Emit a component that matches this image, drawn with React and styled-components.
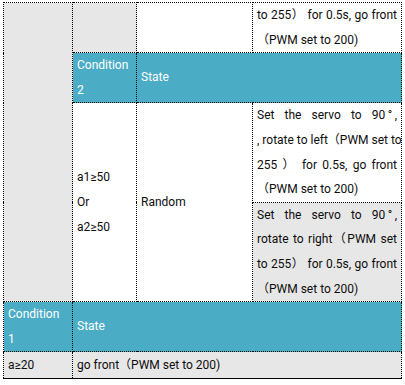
import React from "react";
import styled, { createGlobalStyle } from "styled-components";

const GlobalStyle = createGlobalStyle`
  html, body {
    margin: 0;
    padding: 0;
    background: #ffffff;
  }
  body {
    font-family: Roboto, "DejaVu Sans", "Noto Sans CJK SC", sans-serif;
    font-size: 12px;
    color: #0d0d0d;
  }
`;

const Page = styled.div`
  padding: 2px 0 0 3px;
  width: 405px;
  box-sizing: border-box;
`;

const Table = styled.table`
  border-collapse: collapse;
  table-layout: fixed;
  width: 398px;
  border-bottom: 1px solid #000;
`;

const Col = styled.col`
  width: ${(p) => p.$w}px;
`;

const bgFor = (tone) =>
  tone === "teal" ? "#4bacc6" : tone === "gray" ? "#e7e7e7" : "#ffffff";

const Cell = styled.td`
  border: 1px dotted #000;
  background: ${(p) => bgFor(p.$tone)};
  color: ${(p) => (p.$tone === "teal" ? "#ffffff" : "#0d0d0d")};
  padding: 0 4px;
  line-height: 24.6px;
  vertical-align: middle;
  height: ${(p) => (p.$h ? `${p.$h}px` : "auto")};
  box-sizing: border-box;
`;

const Line = styled.span`
  display: block;
  white-space: nowrap;
  text-align: ${(p) => (p.$last ? "left" : "justify")};
  text-align-last: ${(p) => (p.$last ? "left" : "justify")};
`;

const Para = ({ lines }) =>
  lines.map((t, i) => (
    <Line key={i} $last={i === lines.length - 1}>
      {t}
    </Line>
  ));

export default function App() {
  return (
    <Page>
      <GlobalStyle />
      <Table>
        <colgroup>
          <Col $w={69} />
          <Col $w={64} />
          <Col $w={116} />
          <Col $w={149} />
        </colgroup>
        <tbody>
          <tr>
            <Cell $tone="gray" rowSpan={4} />
            <Cell $tone="gray" />
            <Cell />
            <Cell>
              <Para lines={["to 255） for 0.5s, go front", "（PWM set to 200)"]} />
            </Cell>
          </tr>
          <tr>
            <Cell $tone="teal">
              Condition
              <br />2
            </Cell>
            <Cell $tone="teal" colSpan={2}>
              State
            </Cell>
          </tr>
          <tr>
            <Cell rowSpan={2}>
              a1≥50
              <br />
              Or
              <br />
              a2≥50
            </Cell>
            <Cell rowSpan={2}>Random</Cell>
            <Cell>
              <Para
                lines={[
                  "Set the servo to 90\u2009°\u2009,",
                  ", rotate to left（PWM set to",
                  "255 ） for 0.5s, go front",
                  "（PWM set to 200)",
                ]}
              />
            </Cell>
          </tr>
          <tr>
            <Cell $tone="gray">
              <Para
                lines={[
                  "Set the servo to 90\u2009°\u2009,",
                  "rotate to right（PWM set",
                  "to 255） for 0.5s, go front",
                  "（PWM set to 200)",
                ]}
              />
            </Cell>
          </tr>
          <tr>
            <Cell $tone="teal">
              Condition
              <br />1
            </Cell>
            <Cell $tone="teal" colSpan={3}>
              State
            </Cell>
          </tr>
          <tr>
            <Cell $tone="gray" $h={27}>
              a≥20
            </Cell>
            <Cell $tone="gray" colSpan={3} $h={27}>
              go front（PWM set to 200)
            </Cell>
          </tr>
        </tbody>
      </Table>
    </Page>
  );
}
